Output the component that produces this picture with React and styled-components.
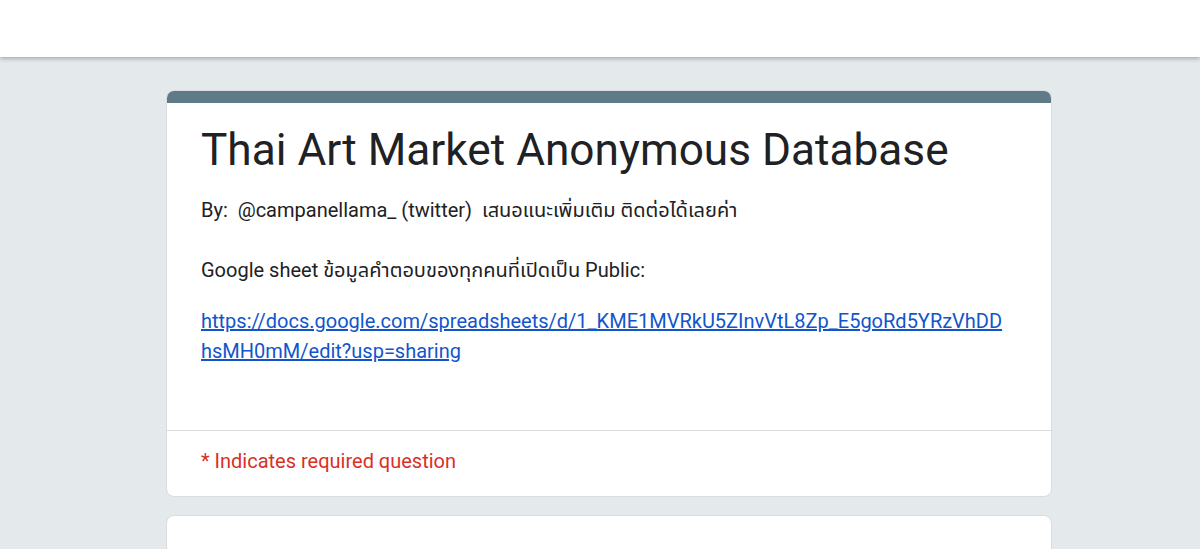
import React from 'react'
import styled, { createGlobalStyle } from 'styled-components'

const GlobalStyle = createGlobalStyle`
  body {
    margin: 0;
    background: #e4e9ec;
    font-family: Roboto, "Noto Sans Thai", "Noto Sans", "Liberation Sans", sans-serif;
    overflow: hidden;
  }
`

const TopBar = styled.header`
  height: 57px;
  background: #fff;
  box-shadow: 0 2px 4px rgba(0, 0, 0, 0.25);
  position: relative;
`

const Page = styled.main`
  padding: 33px 148px 0 166px;
  display: flex;
  flex-direction: column;
  gap: 18px;
`

const Card = styled.section`
  background: #fff;
  border: 1px solid #dadce0;
  border-radius: 8px;
  overflow: hidden;
  height: ${(p) => (p.$h ? p.$h + 'px' : 'auto')};
  box-sizing: border-box;
`

const Band = styled.div`
  height: 13px;
  background: #607b88;
  margin: -1px -1px 0;
`

const Head = styled.div`
  padding: 18px 44px 64px 34px;
`

const Title = styled.h1`
  margin: 0;
  font-size: 44.2px;
  font-weight: 400;
  color: #202124;
  line-height: 58px;
  white-space: nowrap;
`

const Para = styled.p`
  margin: ${(p) => p.$mt || 0}px 0 0;
  font-size: 20px;
  line-height: 30px;
  color: #202124;
  white-space: pre-wrap;
`

const SheetLink = styled.a`
  color: #1155cc;
  text-decoration: underline;
  word-break: break-all;
`

const Divider = styled.div`
  border-top: 1px solid #dadce0;
`

const Required = styled.div`
  padding: 16px 34px 21px;
  font-size: 20px;
  line-height: 28px;
  color: #d93025;
`

export default function App() {
  const url =
    'https://docs.google.com/spreadsheets/d/1_KME1MVRkU5ZInvVtL8Zp_E5goRd5YRzVhDDhsMH0mM/edit?usp=sharing'
  return (
    <>
      <GlobalStyle />
      <TopBar />
      <Page>
        <Card>
          <Band />
          <Head>
            <Title>Thai Art Market Anonymous Database</Title>
            <Para $mt={16}>By:  @campanellama_ (twitter)  เสนอแนะเพิ่มเติม ติดต่อได้เลยค่า</Para>
            <Para $mt={30}>Google sheet ข้อมูลคำตอบของทุกคนที่เปิดเป็น Public:</Para>
            <Para $mt={21}>
              <SheetLink href={url}>{url}</SheetLink>
            </Para>
          </Head>
          <Divider />
          <Required>* Indicates required question</Required>
        </Card>
        <Card $h={40} />
      </Page>
    </>
  )
}
